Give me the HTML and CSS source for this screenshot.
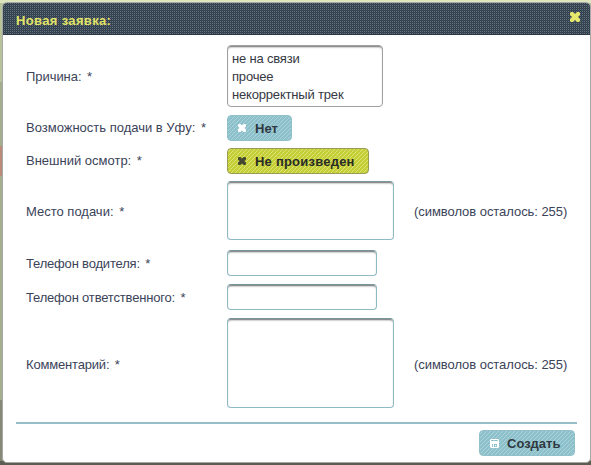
FILE: index.html
```html
<!DOCTYPE html>
<html lang="ru">
<head>
<meta charset="utf-8">
<title>Новая заявка</title>
<link rel="stylesheet" href="styles.css">
</head>
<body>
<svg class="symbols" aria-hidden="true">
  <symbol id="cross" viewBox="0 0 10 10"><path d="M0 1 1 0H3L5 2 7 0H9L10 1V3L8 5 10 7V9L9 10H7L5 8 3 10H1L0 9V7L2 5 0 3Z"/></symbol>
</svg>
<main class="dialog">
  <header class="titlebar">
    <h1>Новая заявка:</h1>
    <svg class="close"><use href="#cross"/></svg>
  </header>
  <form class="form">
    <div class="row reason"><label>Причина: <i>*</i></label>
      <div class="field list"><div>не на связи</div><div>прочее</div><div>некорректный трек</div></div></div>
    <div class="row delivery"><label>Возможность подачи в Уфу: <i>*</i></label>
      <button type="button" class="button no"><svg class="icon"><use href="#cross"/></svg><span>Нет</span></button></div>
    <div class="row inspection"><label>Внешний осмотр: <i>*</i></label>
      <button type="button" class="button active"><svg class="icon"><use href="#cross"/></svg><span>Не произведен</span></button></div>
    <div class="row place"><label>Место подачи: <i>*</i></label>
      <textarea class="field area"></textarea><span class="note">(символов осталось: 255)</span></div>
    <div class="row driver"><label>Телефон водителя: <i>*</i></label><input class="field line"></div>
    <div class="row manager"><label>Телефон ответственного: <i>*</i></label><input class="field line"></div>
    <div class="row comment"><label>Комментарий: <i>*</i></label>
      <textarea class="field area"></textarea><span class="note">(символов осталось: 255)</span></div>
  </form>
  <footer class="actions">
    <button type="button" class="button create"><svg class="icon disk" viewBox="0 0 9 9"><path fill-rule="evenodd" d="M1 0H8L9 1V8L8 9H1L0 8V1ZM1 1V2H8V1ZM2 5V8H3V5ZM4 5V8H7V5ZM5 6H6V7H5Z"/></svg><span>Создать</span></button>
  </footer>
</main>
</body>
</html>
```

FILE: styles.css
```css
* { box-sizing: border-box; }
body {
  margin: 0;
  height: 465px;
  padding: 2px 0 0 2px;
  overflow: hidden;
  background:
    linear-gradient(#dce5bd, #dce5bd) 0 0 / 100% 3px no-repeat,
    linear-gradient(#5c5d50, #5c5d50) 0 100% / 100% 4px no-repeat,
    linear-gradient(#b8c39b 0 82px, #a5ad8e 82px 146px, #b98b78 146px 176px, #a6ae8d 176px 400px, #858976 400px);
  color: #3b4359;
  font: 13px/18px "Liberation Sans", Arial, sans-serif;
}
.symbols { position: absolute; width: 0; height: 0; }
.dialog {
  width: 589px;
  height: 461px;
  border: 1px solid #a6a8a6;
  border-radius: 5px;
  background: #fff;
  overflow: hidden;
}
.titlebar {
  display: flex;
  align-items: center;
  justify-content: space-between;
  height: 32px;
  padding: 0 10px 0 13px;
  border-bottom: 1px solid #2c3845;
  background: conic-gradient(#667482 25%, #303d4b 0 50%, #3c4957 0 75%, #303d4b 0) 0 0 / 2px 2px;
}
h1 { margin: 4px 0 0; color: #e2e466; font-size: 13px; line-height: 18px; letter-spacing: .35px; }
.close { width: 10px; height: 10px; margin-bottom: 3px; fill: #e6e86c; }
.form { height: 387px; padding: 10px 13px 0 23px; }
.row { display: grid; grid-template-columns: 201px 187px 1fr; align-items: center; }
label, .note { white-space: nowrap; }
label i { margin-left: 2px; font-style: normal; }
.reason { height: 62px; }
.delivery { height: 26px; margin-top: 8px; }
.inspection { height: 26px; margin-top: 7px; }
.place { height: 59px; margin-top: 7px; }
.driver { height: 26px; margin-top: 10px; }
.manager { height: 26px; margin-top: 8px; }
.comment { height: 90px; margin-top: 8px; }
.reason label, .place label, .place .note, .driver label, .manager label { padding-top: 2px; }
.comment label, .comment .note { padding-top: 4px; }
.reason label { letter-spacing: -.05px; }
.driver label, .manager label, .comment label { letter-spacing: -.18px; }
.note { letter-spacing: -.05px; }
.field {
  display: block;
  margin: 0;
  border: 1px solid #8fbac2;
  border-top-color: #76969b;
  border-radius: 4px;
  background: #fff;
  box-shadow: inset 0 2px 2px -1px #666;
  resize: none;
  outline: 0;
}
.list { width: 156px; height: 62px; padding: 4px; border-color: #a0a0a0; color: #363843; letter-spacing: -.18px; }
.line { width: 150px; height: 26px; }
.area { width: 167px; height: 100%; }
.button {
  display: flex;
  align-items: center;
  width: 65px;
  height: 26px;
  padding: 0 0 0 10px;
  border: 1px solid #91c0cb;
  border-radius: 4px;
  background: repeating-linear-gradient(135deg, #8cc0cb 0 2px, #add2d9 2px 2.828px);
  color: #303941;
  font: bold 13px/18px "Liberation Sans", Arial, sans-serif;
  white-space: nowrap;
}
.button span { padding-top: 2px; }
.active {
  width: 142px;
  border-color: #989b55;
  background: repeating-linear-gradient(135deg, #c4ce35 0 2px, #dce276 2px 2.828px);
  color: #292c25;
  letter-spacing: .22px;
}
.icon { width: 8px; height: 8px; margin-right: 9px; fill: #fff; }
.active .icon { fill: #454830; }
.actions {
  display: flex;
  justify-content: flex-end;
  margin: 0 13px;
  height: 36px;
  padding: 6px 2px 0 0;
  border-top: 2px solid #94bfc8;
}
.create { width: 96px; }
.disk { width: 9px; height: 9px; margin-right: 8px; }
```
